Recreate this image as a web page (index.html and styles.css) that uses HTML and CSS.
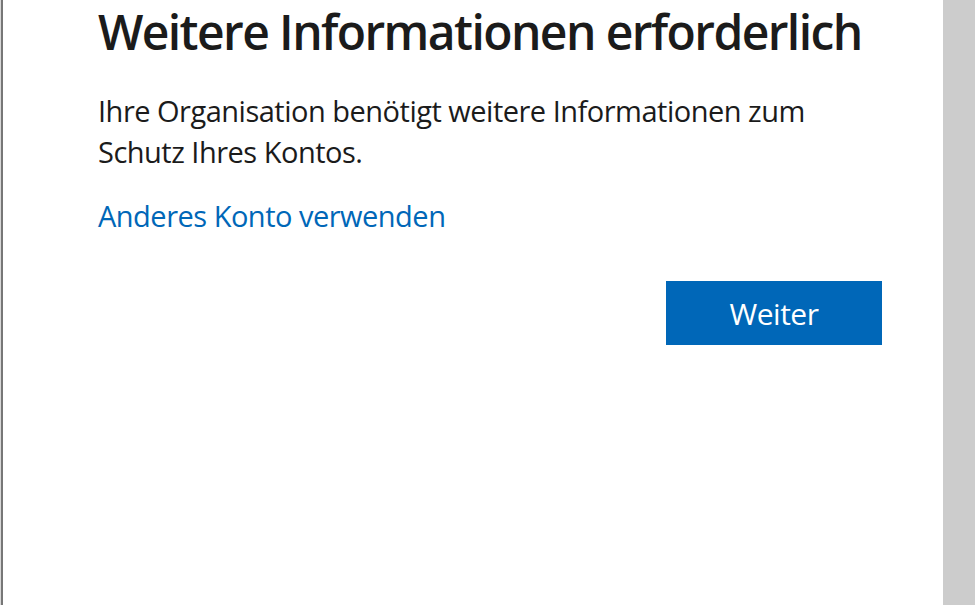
FILE: index.html
```html
<!DOCTYPE html>
<html lang="de">
<head>
<meta charset="utf-8">
<title>Weitere Informationen erforderlich</title>
<link rel="stylesheet" href="styles.css">
</head>
<body>
<div class="page">
  <div class="edge"></div>
  <main class="content">
    <h1 class="title">Weitere Informationen erforderlich</h1>
    <p class="text">Ihre Organisation benötigt weitere Informationen zum Schutz Ihres Kontos.</p>
    <a class="link" href="#">Anderes Konto verwenden</a>
    <div class="actions">
      <button class="btn" type="button">Weiter</button>
    </div>
  </main>
  <div class="side"></div>
</div>
</body>
</html>
```

FILE: styles.css
```css
html, body {
  margin: 0;
  padding: 0;
  height: 100%;
  background: #ffffff;
}
body {
  font-family: "Open Sans", "Noto Sans", sans-serif;
  color: #1b1b1b;
  overflow: hidden;
}
.page {
  display: flex;
  height: 605px;
}
.edge {
  width: 1px;
  background: #d8d8d8;
  border-right: 2px solid #777777;
  flex: none;
}
.content {
  flex: 1;
  min-width: 0;
  padding: 0 61px 0 95px;
  display: flex;
  flex-direction: column;
  align-items: flex-start;
}
.side {
  width: 32px;
  background: #cccccc;
  flex: none;
}
.title {
  margin: 0;
  font-size: 48px;
  line-height: 63px;
  font-weight: 600;
  letter-spacing: -1.6px;
  color: #1b1b1b;
  white-space: nowrap;
}
.text {
  margin: 27px 0 0;
  font-size: 29px;
  line-height: 41px;
  letter-spacing: -0.5px;
  max-width: 730px;
}
.link {
  margin-top: 24px;
  font-size: 29px;
  line-height: 40px;
  letter-spacing: -0.5px;
  color: #0067b8;
  text-decoration: none;
}
.actions {
  align-self: stretch;
  display: flex;
  justify-content: flex-end;
  margin-top: 45px;
}
.btn {
  width: 216px;
  height: 64px;
  border: none;
  background: #0067b8;
  color: #ffffff;
  font-family: inherit;
  font-size: 30px;
  letter-spacing: -0.5px;
  padding: 0;
}
```
